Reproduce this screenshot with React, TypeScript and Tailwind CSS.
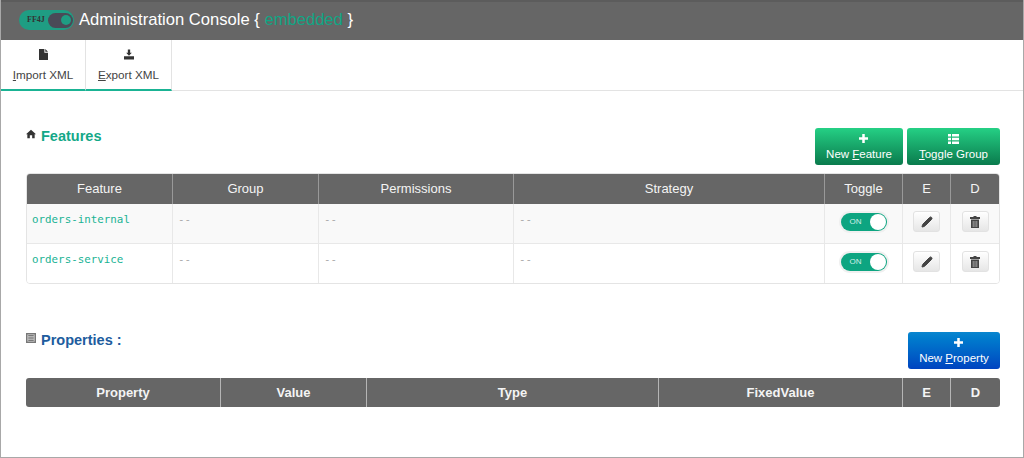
import { Pencil } from 'lucide-react'

const sans = "font-['Liberation_Sans',Arial,sans-serif]"

const featureCols = ['w-[146px]', 'w-[146px]', 'w-[195px]', 'w-[311px]', 'w-[78px]', 'w-[48px]', 'w-[48px]']
const propertyCols = ['w-[195px]', 'w-[146px]', 'w-[292px]', 'w-[244px]', 'w-[48px]', 'w-[49px]']

const featureHead = ['Feature', 'Group', 'Permissions', 'Strategy', 'Toggle', 'E', 'D']
const propertyHead = ['Property', 'Value', 'Type', 'FixedValue', 'E', 'D']

const rows = [
  { name: 'orders-internal', bg: 'bg-[#f9f9f9]' },
  { name: 'orders-service', bg: 'bg-white' },
]

function HomeIcon() {
  return (
    <svg viewBox="0 0 12 12" className="w-[10px] h-[10px] fill-[#333]">
      <path d="M6 1 L12 6.4 L10.4 6.4 L10.4 11 L7.4 11 L7.4 7.6 L4.6 7.6 L4.6 11 L1.6 11 L1.6 6.4 L0 6.4 Z" />
    </svg>
  )
}

function ListBoxIcon() {
  return (
    <svg viewBox="0 0 11 11" className="w-[10px] h-[10px] mt-[1px]">
      <rect x="0" y="0" width="11" height="11" fill="#777" />
      <rect x="1.5" y="1.5" width="8" height="8" fill="#ccc" />
      <path d="M2.5 3 H8.5 M2.5 5.5 H8.5 M2.5 8 H8.5" stroke="#555" strokeWidth="1" />
    </svg>
  )
}

function ImportIcon() {
  return (
    <svg viewBox="0 0 10 12" className="w-[9px] h-[11px] fill-[#333]">
      <path d="M0 0 H6 V4 H10 V12 H0 Z M7 0 L10 3 H7 Z" />
    </svg>
  )
}

function ExportIcon() {
  return (
    <svg viewBox="0 0 12 12" className="w-[10px] h-[11px] fill-[#333]">
      <path d="M4.6 0 H7.4 V4 H9.4 L6 7.4 L2.6 4 H4.6 Z M0 8 H12 V12 H0 Z" />
    </svg>
  )
}

function PlusIcon() {
  return (
    <svg viewBox="0 0 10 10" className="w-[9px] h-[9px] fill-white ml-[8px]">
      <path d="M3.6 0 H6.4 V3.6 H10 V6.4 H6.4 V10 H3.6 V6.4 H0 V3.6 H3.6 Z" />
    </svg>
  )
}

function ListIcon() {
  return (
    <svg viewBox="0 0 11 10" className="w-[11px] h-[10px] fill-white">
      <path d="M0 0 H3 V2.6 H0 Z M4 0 H11 V2.6 H4 Z M0 3.7 H3 V6.3 H0 Z M4 3.7 H11 V6.3 H4 Z M0 7.4 H3 V10 H0 Z M4 7.4 H11 V10 H4 Z" />
    </svg>
  )
}

function TrashIcon() {
  return (
    <svg viewBox="0 0 12 12" className="w-[12px] h-[12px] fill-[#444]">
      <path d="M4.5 0 H7.5 V1 H11 V3 H1 V1 H4.5 Z M2 3.6 H10 V12 H2 Z" />
      <path d="M4.2 5 V11 M6 5 V11 M7.8 5 V11" stroke="#ddd" strokeWidth="0.6" />
    </svg>
  )
}

function Toggle() {
  return (
    <div className="mx-auto mb-[3px] w-[46px] h-[18px] rounded-full bg-[#0da581] ring-2 ring-[#f0f0f0] flex items-center justify-between pl-[9px] pr-[1px]">
      <span className="text-[8px] text-[#d5f0e8]">ON</span>
      <span className="w-[16px] h-[16px] rounded-full bg-white" />
    </div>
  )
}

function IconButton({ children }: { children: React.ReactNode }) {
  return (
    <div className="mx-auto mb-[3px] w-[27px] h-[21px] rounded-[3px] border border-[#e2e2e2] bg-gradient-to-b from-white to-[#e6e6e6] flex items-center justify-center">
      {children}
    </div>
  )
}

function ActionButton({ icon, label, first, rest, className }: { icon: React.ReactNode; label?: string; first: string; rest: string; className: string }) {
  return (
    <button className={`h-[37px] rounded-[3px] flex flex-col items-center justify-center text-white text-[11.5px] leading-[14px] ${className}`}>
      <span className="h-[13px] flex items-center">{icon}</span>
      <span className="pt-[2px] whitespace-nowrap">
        {label}
        <u>{first}</u>
        {rest}
      </span>
    </button>
  )
}

export default function App() {
  return (
    <div className={`w-[1024px] h-[458px] overflow-hidden bg-white border-x border-b border-[#a8a8a8] ${sans}`}>
      {/* Header */}
      <header className="h-[40px] bg-[#666] border-t-2 border-[#5c5c5c] flex items-center pl-[18px] gap-[5px]">
        <div className="w-[55px] h-[20px] rounded-full bg-[#1f9d83] flex items-center justify-between pl-[8px] pr-[1px] mt-[-2px]">
          <span className="font-['Liberation_Serif',serif] font-bold text-[8px] text-[#333]">FF4J</span>
          <span className="w-[25px] h-[15px] rounded-full bg-[#4a4a57] flex items-center justify-end pr-[2px]">
            <span className="w-[10px] h-[10px] rounded-full bg-[#1f9d83]" />
          </span>
        </div>
        <span className="text-[16.6px] text-white whitespace-nowrap mt-[-2px]">
          Administration Console {'{ '}
          <span className="text-[#11a584]">embedded</span>
          {' }'}
        </span>
      </header>

      {/* Toolbar */}
      <nav className="h-[51px] border-b border-[#e3e3e3] flex">
        <div className="w-[85px] border-r border-[#e3e3e3] border-b-2 border-b-[#1ab394] mb-[-1px] flex flex-col items-center pt-[9px]">
          <ImportIcon />
          <span className="text-[11.7px] leading-[14px] mt-[8px] text-[#444]"><u>I</u>mport XML</span>
        </div>
        <div className="w-[86px] border-b-2 border-[#1ab394] border-r border-r-[#e3e3e3] mb-[-1px] flex flex-col items-center pt-[9px]">
          <ExportIcon />
          <span className="text-[11.7px] leading-[14px] mt-[8px] text-[#444]"><u>E</u>xport XML</span>
        </div>
      </nav>

      <main className="pl-[25px] w-[999px]">
        {/* Features */}
        <section className="pt-[37px]">
          <div className="flex justify-between h-[45px]">
            <div className="flex items-start gap-[5px]">
              <span className="mt-[1px]"><HomeIcon /></span>
              <h2 className="text-[14.5px] leading-[17px] font-bold text-[#13a888]">Features</h2>
            </div>
            <div className="flex gap-[4px]">
              <ActionButton icon={<PlusIcon />} label="New " first="F" rest="eature" className="w-[88px] bg-gradient-to-b from-[#25d085] to-[#0a7b4d]" />
              <ActionButton icon={<ListIcon />} first="T" rest="oggle Group" className="w-[93px] bg-gradient-to-b from-[#25d085] to-[#0a7b4d]" />
            </div>
          </div>
          <table className="w-[974px] table-fixed border-separate border-spacing-0 border border-[#e4e4e4] rounded-[4px] overflow-hidden text-[13px]">
            <colgroup>
              {featureCols.map((c, i) => <col key={i} className={c} />)}
            </colgroup>
            <thead>
              <tr className="h-[30px] bg-[#666] text-[#f4f4f4]">
                {featureHead.map((h, i) => (
                  <th key={h} className={`font-normal text-[13px] ${i < 6 ? 'border-r border-[#999]' : ''}`}>{h}</th>
                ))}
              </tr>
            </thead>
            <tbody>
              {rows.map((r, idx) => (
                <tr key={r.name} className={`h-[39.5px] ${r.bg}`}>
                  {[0, 1, 2, 3, 4, 5, 6].map((i) => (
                    <td key={i} className={`${i < 6 ? 'border-r' : ''} ${idx === 0 ? 'border-b' : ''} border-[#e8e8e8] ${i < 4 ? 'align-top pt-[5px] pl-[5px]' : 'align-middle'}`}>
                      {i === 0 && <span className="font-['DejaVu_Sans_Mono',monospace] text-[10.85px] text-[#1ab394]">{r.name}</span>}
                      {i > 0 && i < 4 && <span className="font-['DejaVu_Sans_Mono',monospace] text-[10.85px] text-[#aaa]">--</span>}
                      {i === 4 && <Toggle />}
                      {i === 5 && <IconButton><Pencil size={12} className="fill-[#444] text-[#444]" /></IconButton>}
                      {i === 6 && <IconButton><TrashIcon /></IconButton>}
                    </td>
                  ))}
                </tr>
              ))}
            </tbody>
          </table>
        </section>

        {/* Properties */}
        <section className="pt-[48px]">
          <div className="flex justify-between h-[46px]">
            <div className="flex items-start gap-[5px]">
              <ListBoxIcon />
              <h2 className="text-[14.5px] leading-[17px] font-bold text-[#205c9e]">Properties :</h2>
            </div>
            <ActionButton icon={<PlusIcon />} label="New " first="P" rest="roperty" className="w-[92px] bg-gradient-to-b from-[#0a86cf] to-[#0043c0]" />
          </div>
          <table className="w-[974px] table-fixed border-separate border-spacing-0 rounded-[3px] overflow-hidden">
            <colgroup>
              {propertyCols.map((c, i) => <col key={i} className={c} />)}
            </colgroup>
            <thead>
              <tr className="h-[29px] bg-[#666] text-[#f4f4f4]">
                {propertyHead.map((h, i) => (
                  <th key={h} className={`font-bold text-[13px] ${i < 5 ? 'border-r border-[#b5b5b5]' : ''}`}>{h}</th>
                ))}
              </tr>
            </thead>
          </table>
        </section>
      </main>
    </div>
  )
}
